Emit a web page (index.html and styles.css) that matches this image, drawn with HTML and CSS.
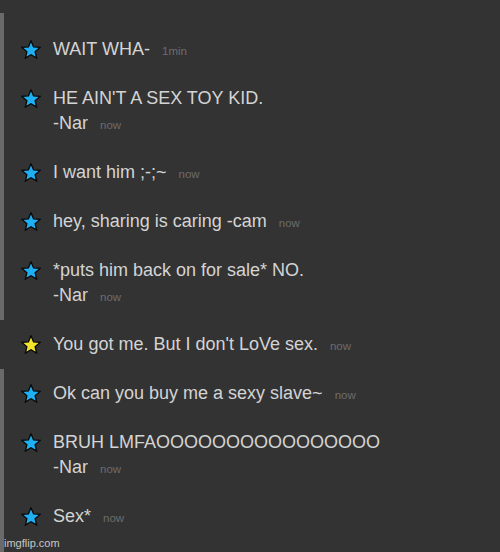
FILE: index.html
```html
<!DOCTYPE html>
<html lang="en">

<head>
    <meta charset="UTF-8" />
    <meta name="viewport" content="width=device-width, initial-scale=1.0" />
    <title>comments</title>
    <link rel="stylesheet" href="styles.css">
</head>

<body>
    <div class="thread">
        <div class="group">
            <div class="comment">
                <span class="star blue"><svg viewBox="0.8 0.6 22.4 21.6"><polygon points="12,1.5 14.9,8.4 22.3,9 16.7,13.9 18.4,21.2 12,17.3 5.6,21.2 7.3,13.9 1.7,9 9.1,8.4" /></svg></span>
                <div class="text">WAIT WHA-<span class="time">1min</span></div>
            </div>
            <div class="comment">
                <span class="star blue"><svg viewBox="0.8 0.6 22.4 21.6"><polygon points="12,1.5 14.9,8.4 22.3,9 16.7,13.9 18.4,21.2 12,17.3 5.6,21.2 7.3,13.9 1.7,9 9.1,8.4" /></svg></span>
                <div class="text">HE AIN'T A SEX TOY KID.<br>-Nar<span class="time">now</span></div>
            </div>
            <div class="comment">
                <span class="star blue"><svg viewBox="0.8 0.6 22.4 21.6"><polygon points="12,1.5 14.9,8.4 22.3,9 16.7,13.9 18.4,21.2 12,17.3 5.6,21.2 7.3,13.9 1.7,9 9.1,8.4" /></svg></span>
                <div class="text">I want him ;-;~<span class="time">now</span></div>
            </div>
            <div class="comment">
                <span class="star blue"><svg viewBox="0.8 0.6 22.4 21.6"><polygon points="12,1.5 14.9,8.4 22.3,9 16.7,13.9 18.4,21.2 12,17.3 5.6,21.2 7.3,13.9 1.7,9 9.1,8.4" /></svg></span>
                <div class="text">hey, sharing is caring -cam<span class="time">now</span></div>
            </div>
            <div class="comment">
                <span class="star blue"><svg viewBox="0.8 0.6 22.4 21.6"><polygon points="12,1.5 14.9,8.4 22.3,9 16.7,13.9 18.4,21.2 12,17.3 5.6,21.2 7.3,13.9 1.7,9 9.1,8.4" /></svg></span>
                <div class="text">*puts him back on for sale* NO.<br>-Nar<span class="time">now</span></div>
            </div>
        </div>

        <div class="group plain">
            <div class="comment">
                <span class="star yellow"><svg viewBox="0.8 0.6 22.4 21.6"><polygon points="12,1.5 14.9,8.4 22.3,9 16.7,13.9 18.4,21.2 12,17.3 5.6,21.2 7.3,13.9 1.7,9 9.1,8.4" /></svg></span>
                <div class="text">You got me. But I don't LoVe sex.<span class="time">now</span></div>
            </div>
        </div>

        <div class="group last">
            <div class="comment">
                <span class="star blue"><svg viewBox="0.8 0.6 22.4 21.6"><polygon points="12,1.5 14.9,8.4 22.3,9 16.7,13.9 18.4,21.2 12,17.3 5.6,21.2 7.3,13.9 1.7,9 9.1,8.4" /></svg></span>
                <div class="text">Ok can you buy me a sexy slave~<span class="time">now</span></div>
            </div>
            <div class="comment">
                <span class="star blue"><svg viewBox="0.8 0.6 22.4 21.6"><polygon points="12,1.5 14.9,8.4 22.3,9 16.7,13.9 18.4,21.2 12,17.3 5.6,21.2 7.3,13.9 1.7,9 9.1,8.4" /></svg></span>
                <div class="text">BRUH LMFAOOOOOOOOOOOOOOOO<br>-Nar<span class="time">now</span></div>
            </div>
            <div class="comment">
                <span class="star blue"><svg viewBox="0.8 0.6 22.4 21.6"><polygon points="12,1.5 14.9,8.4 22.3,9 16.7,13.9 18.4,21.2 12,17.3 5.6,21.2 7.3,13.9 1.7,9 9.1,8.4" /></svg></span>
                <div class="text">Sex*<span class="time">now</span></div>
            </div>
        </div>
    </div>

    <div class="watermark">imgflip.com</div>
</body>

</html>
```

FILE: styles.css
```css
html,
body {
    margin: 0;
    padding: 0;
    height: 100%;
    background-color: #333333;
    font-family: "Liberation Sans", Arial, sans-serif;
    overflow: hidden;
}

.thread {
    padding-top: 13px;
}

.group {
    border-left: 4px solid #6a6a6a;
}

.group:first-child {
    padding-top: 12px;
}

.group.plain {
    border-left-color: transparent;
}

.group.last {
    padding-bottom: 20px;
}

.comment {
    display: flex;
    align-items: flex-start;
    gap: 12px;
    padding: 12px 0 12px 17px;
}

.star {
    display: flex;
    align-items: center;
    justify-content: center;
    width: 20px;
    height: 25px;
    flex: none;
}

.star svg {
    display: block;
    flex: none;
    width: 20px;
    height: 19px;
    stroke: #0a0a0a;
    stroke-width: 1.5;
    stroke-linejoin: miter;
}

.star.blue svg {
    fill: #1eb0f2;
}

.star.yellow svg {
    fill: #f2e52c;
}

.text {
    color: #d4d4d4;
    font-size: 18px;
    line-height: 25px;
}

.time {
    color: #6c6c6c;
    font-size: 11.5px;
    line-height: 1;
    margin-left: 12px;
}

.watermark {
    position: absolute;
    left: 4px;
    bottom: 2px;
    color: #c8c8c8;
    font-size: 11px;
    line-height: 14px;
}
```
